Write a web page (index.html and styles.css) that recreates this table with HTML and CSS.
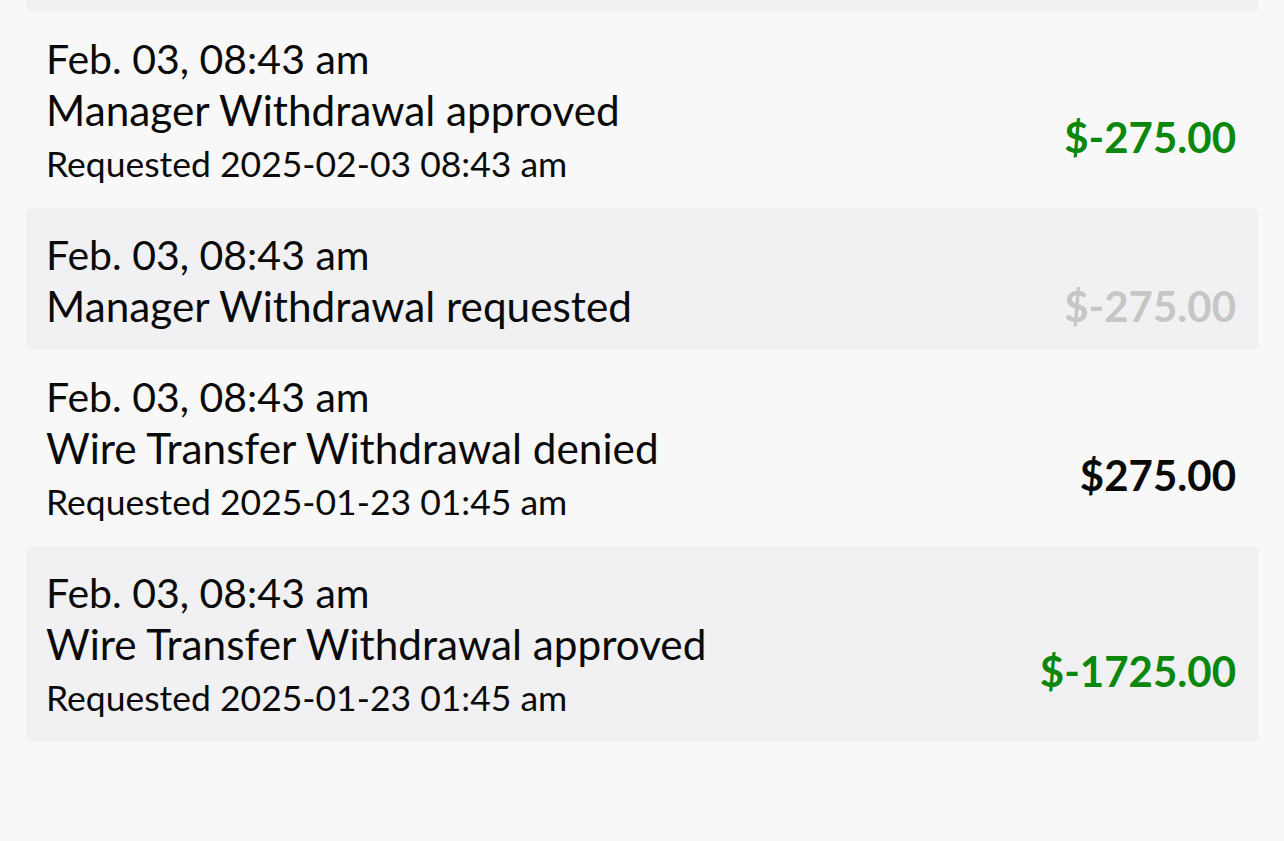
FILE: index.html
```html
<!DOCTYPE html>
<html>
<head>
<meta charset="utf-8">
<link rel="stylesheet" href="styles.css">
</head>
<body>
<div class="list">
  <div class="row shaded prev"></div>
  <div class="row">
    <div class="date">Feb. 03, 08:43 am</div>
    <div class="body">
      <div class="info">
        <div class="title">Manager Withdrawal approved</div>
        <div class="sub">Requested 2025-02-03 08:43 am</div>
      </div>
      <div class="amount green">$-275.00</div>
    </div>
  </div>
  <div class="row shaded">
    <div class="date">Feb. 03, 08:43 am</div>
    <div class="body">
      <div class="info">
        <div class="title">Manager Withdrawal requested</div>
      </div>
      <div class="amount muted">$-275.00</div>
    </div>
  </div>
  <div class="row">
    <div class="date">Feb. 03, 08:43 am</div>
    <div class="body">
      <div class="info">
        <div class="title">Wire Transfer Withdrawal denied</div>
        <div class="sub">Requested 2025-01-23 01:45 am</div>
      </div>
      <div class="amount">$275.00</div>
    </div>
  </div>
  <div class="row shaded">
    <div class="date">Feb. 03, 08:43 am</div>
    <div class="body">
      <div class="info">
        <div class="title">Wire Transfer Withdrawal approved</div>
        <div class="sub">Requested 2025-01-23 01:45 am</div>
      </div>
      <div class="amount green">$-1725.00</div>
    </div>
  </div>
</div>
</body>
</html>
```

FILE: styles.css
```css
html, body {
  margin: 0;
  padding: 0;
  background: #f8f8f8;
}
body {
  font-family: Lato, "Open Sans", sans-serif;
  color: #0a0a0a;
  height: 841px;
  overflow: hidden;
}
.list {
  padding: 0 26px;
  display: flex;
  flex-direction: column;
}
.row {
  padding: 21px 22px 19px 20px;
  border-radius: 5px;
}
.row.shaded {
  background: #f1f1f3;
}
.row.prev {
  height: 12px;
  padding: 0;
  border-radius: 0 0 5px 5px;
}
.date {
  font-size: 41px;
  line-height: 51px;
}
.title {
  font-size: 42.3px;
  line-height: 51px;
}
.body {
  display: flex;
  align-items: center;
  justify-content: space-between;
}
.sub {
  font-size: 35.5px;
  line-height: 54px;
  padding-top: 2px;
  margin-bottom: -2px;
}
.amount {
  font-size: 42px;
  font-weight: 700;
  line-height: 50px;
}
.amount.green { color: #0b870b; }
.amount.muted { color: #c6c6c6; }
```
